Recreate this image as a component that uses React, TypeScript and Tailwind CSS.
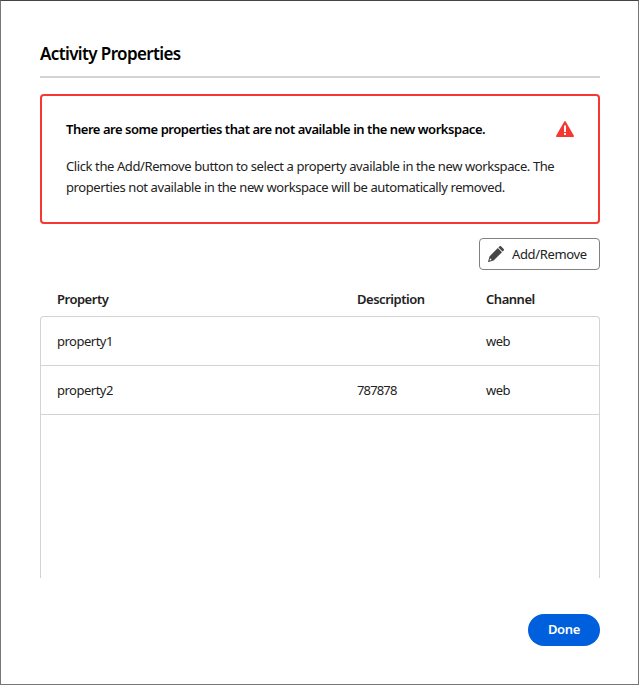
import React from "react";

const rows = [
  { name: "property1", description: "", channel: "web" },
  { name: "property2", description: "787878", channel: "web" },
];

export default function App() {
  return (
    <main className="h-[685px] w-[639px] border border-[#777] border-t-[#444] bg-white pl-[39px] pr-[38px] pt-[39px] font-['Noto_Sans','Open_Sans',sans-serif] text-[13px] text-[#222]">
      <h1 className="h-[38px] border-b-2 border-[#d3d3d3] text-[17px] font-semibold leading-[27px] tracking-[-0.62px] text-black">Activity Properties</h1>
      <section className="mt-4 flex h-[130px] rounded border-2 border-[#f73831] px-6 pt-[23px]">
        <div className="min-w-0 flex-1">
          <h2 className="whitespace-nowrap text-[13px] font-semibold leading-5 tracking-[-0.46px] text-black">There are some properties that are not available in the new workspace.</h2>
          <p className="mt-[17px] whitespace-nowrap leading-[21px] tracking-[-0.4px]">Click the Add/Remove button to select a property available in the new workspace. The<br />properties not available in the new workspace will be automatically removed.</p>
        </div>
        <svg width="18" height="16" viewBox="0 0 18 16" className="mt-0.5 shrink-0"><path d="M8.3.5.1 14.8A.8.8 0 0 0 .8 16h16.4a.8.8 0 0 0 .7-1.2L9.7.5a.8.8 0 0 0-1.4 0Z" fill="#f73831" /><path d="M8 4.5h2V11H8ZM8 12h2v2H8Z" fill="#fff" /></svg>
      </section>
      <div className="mt-3.5 flex justify-end">
        <button className="flex h-8 w-[121px] items-center rounded border border-[#808080] pl-2 pt-px">
          <svg width="16" height="16" viewBox="0 0 16 16" className="mr-2 -mt-px" fill="#464646"><path d="M9.8 2 14 6.2l-8.4 8.3L.5 15.9a.3.3 0 0 1-.4-.4l1.4-5.1ZM10.4 1.4l1.2-1.1a1 1 0 0 1 1.4 0l2.7 2.7a1 1 0 0 1 0 1.4l-1.1 1.2Z" /><path d="m2.1 12.3 1.6 1.6-2.2.7Z" fill="#fff" /></svg>
          <span className="tracking-[-0.35px]">Add/Remove</span>
        </button>
      </div>
      <div className="mt-4 grid h-[30px] grid-cols-[300px_129px_1fr] pl-[17px] pt-1 font-semibold tracking-[-0.48px]">
        <span>Property</span><span>Description</span><span>Channel</span>
      </div>
      <div className="h-[262px] rounded-t border border-b-0 border-[#d3d3d3]">
        {rows.map((r) => (
          <div key={r.name} className="grid h-[49px] grid-cols-[300px_129px_1fr] items-center border-b border-[#d3d3d3] pl-4 pt-0.5">
            <span className="tracking-[-0.5px]">{r.name}</span><span className="tracking-[-0.85px]">{r.description}</span><span className="tracking-[-0.5px]">{r.channel}</span>
          </div>
        ))}
      </div>
      <div className="mt-9 flex justify-end"><button className="h-8 w-[72px] rounded-full bg-[#005fdd] font-semibold tracking-[-0.3px] text-white">Done</button></div>
    </main>
  );
}
